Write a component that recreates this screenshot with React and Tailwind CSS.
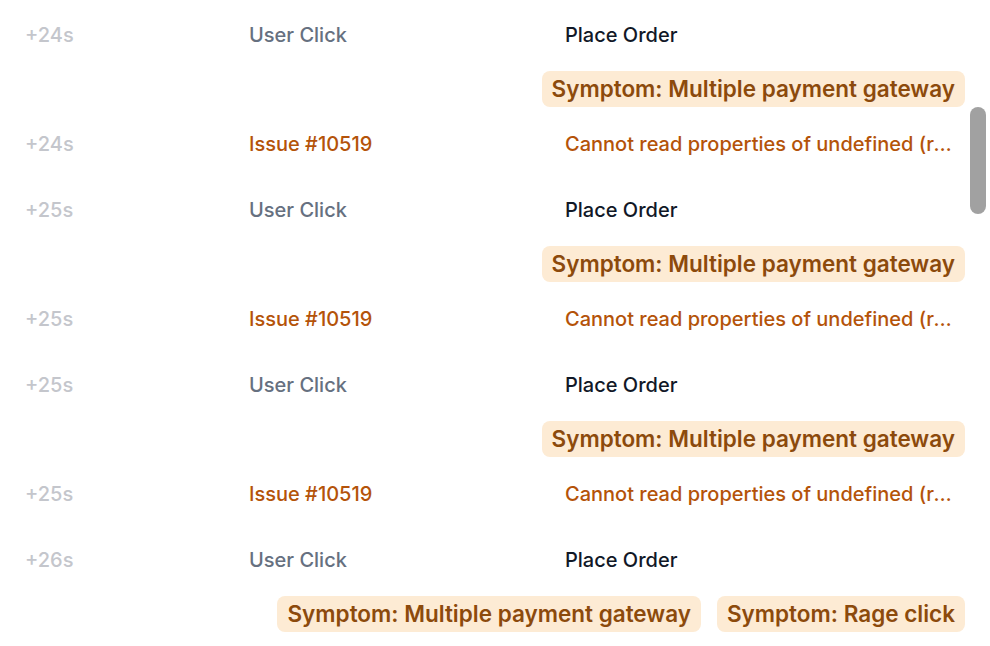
import React from 'react';

const events = [
  { time: '+24s', type: 'User Click', text: 'Place Order', symptoms: ['Symptom: Multiple payment gateway'] },
  { time: '+24s', type: 'Issue #10519', text: 'Cannot read properties of undefined (reading \'amount\')', issue: true },
  { time: '+25s', type: 'User Click', text: 'Place Order', symptoms: ['Symptom: Multiple payment gateway'] },
  { time: '+25s', type: 'Issue #10519', text: 'Cannot read properties of undefined (reading \'amount\')', issue: true },
  { time: '+25s', type: 'User Click', text: 'Place Order', symptoms: ['Symptom: Multiple payment gateway'] },
  { time: '+25s', type: 'Issue #10519', text: 'Cannot read properties of undefined (reading \'amount\')', issue: true },
  { time: '+26s', type: 'User Click', text: 'Place Order', symptoms: ['Symptom: Multiple payment gateway', 'Symptom: Rage click'] },
];

const App = () => {
  return (
    <div className="relative w-[990px] h-[646px] overflow-hidden bg-white font-['Inter',sans-serif] text-[20px] font-medium">
      <div className="pt-[2px]">
        {events.map((ev, index) => (
          <div key={index}>
            {/* Event row */}
            <div className="flex items-center h-[66px] pl-[25px] pr-[25px]">
              <div className="w-[224px] shrink-0 text-[#c4c6cc]">{ev.time}</div>
              <div className={`w-[316px] shrink-0 ${ev.issue ? 'text-[#b45309]' : 'text-[#667080]'}`}>
                {ev.type}
              </div>
              <div className={`flex-1 min-w-0 truncate pr-[6px] ${ev.issue ? 'text-[#b45309]' : 'text-[#111827]'}`}>
                {ev.text}
              </div>
            </div>

            {/* Symptoms */}
            {ev.symptoms && (
              <div className="flex justify-end gap-[16px] pr-[25px] pt-[3px] pb-[4px]">
                {ev.symptoms.map((s) => (
                  <span
                    key={s}
                    className="h-[36px] flex items-center px-[10px] rounded-[8px] bg-[#fdebd4] text-[#8c4a0c] text-[22.5px] font-semibold"
                  >
                    {s}
                  </span>
                ))}
              </div>
            )}
          </div>
        ))}
      </div>

      {/* overlay scrollbar */}
      <div className="absolute left-[970px] top-[107px] w-[16px] h-[107px] rounded-full bg-[#a1a1a1]" />
    </div>
  );
};

export default App;
